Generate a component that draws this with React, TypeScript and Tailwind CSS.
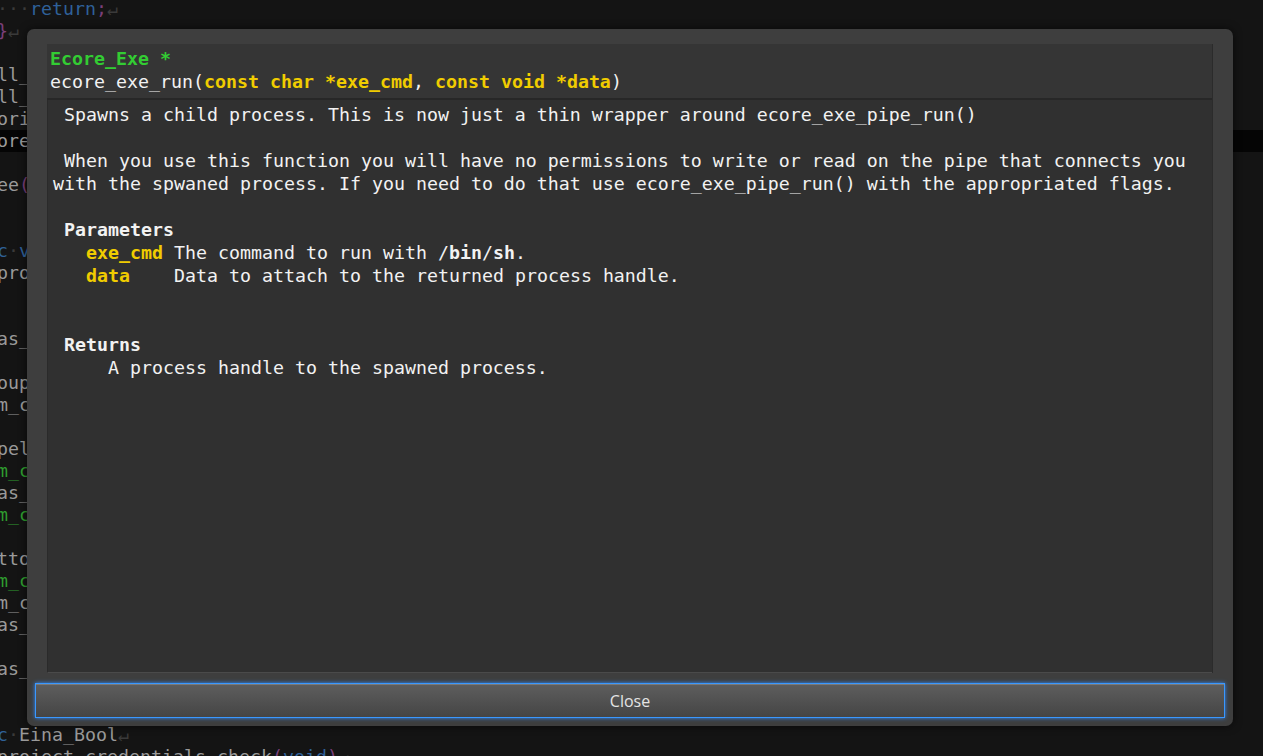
import React from 'react';

type Seg = { t: string; c?: string };

const GRAY = 'text-[#9a9a9a]';
const BLUE = 'text-[#2f6199]';
const PURPLE = 'text-[#7a3f7a]';
const GREEN = 'text-[#2f9e2f]';
const WS = 'text-[#3a3a3a]';

// background editor lines, shown from column 5 on (the rest is scrolled off / under the popup)
const codeLines: Seg[][] = [
  [{ t: '···', c: WS }, { t: 'return', c: BLUE }, { t: ';', c: PURPLE }, { t: '↵', c: WS }],
  [{ t: '}', c: PURPLE }, { t: '↵', c: WS }],
  [],
  [{ t: 'll_', c: GRAY }],
  [{ t: 'll_', c: GRAY }],
  [{ t: 'ori', c: GRAY }],
  [{ t: 'ore', c: GRAY }],
  [],
  [{ t: 'ee', c: GRAY }, { t: '(', c: PURPLE }],
  [],
  [],
  [{ t: 'c', c: BLUE }, { t: '·', c: WS }, { t: 'v', c: BLUE }],
  [{ t: 'pro', c: GRAY }],
  [],
  [],
  [{ t: 'as_', c: GRAY }],
  [],
  [{ t: 'oup', c: GRAY }],
  [{ t: 'm_c', c: GRAY }],
  [],
  [{ t: 'pel', c: GRAY }],
  [{ t: 'm_c', c: GREEN }],
  [{ t: 'as_', c: GRAY }],
  [{ t: 'm_c', c: GREEN }],
  [],
  [{ t: 'tto', c: GRAY }],
  [{ t: 'm_c', c: GREEN }],
  [{ t: 'm_c', c: GRAY }],
  [{ t: 'as_', c: GRAY }],
  [],
  [{ t: 'as_', c: GRAY }],
  [],
  [],
  [{ t: 'c', c: BLUE }, { t: '·', c: WS }, { t: 'Eina_Bool', c: GRAY }, { t: '↵', c: WS }],
  [
    { t: 'project_credentials_check', c: GRAY },
    { t: '(', c: PURPLE },
    { t: 'void', c: BLUE },
    { t: ')', c: PURPLE },
    { t: '↵', c: WS },
  ],
];

const Y = 'text-[#f0cc00] font-bold';
const B = 'font-bold';

export default function App() {
  return (
    <div
      className="relative h-[756px] w-full overflow-hidden bg-[#141414]"
      style={{ fontFamily: '"DejaVu Sans Mono", monospace' }}
    >
      {/* editor behind the popup */}
      <div className="-mt-[2px] text-[18.27px] leading-[22px]">
        {codeLines.map((line, i) => (
          <div
            key={i}
            className={`h-[22px] whitespace-pre -ml-[3px] ${i === 6 ? 'bg-[#050505]' : ''}`}
          >
            {line.map((s, j) => (
              <span key={j} className={s.c}>
                {s.t}
              </span>
            ))}
          </div>
        ))}
      </div>

      {/* documentation popup */}
      <div className="absolute left-[27px] top-[29px] flex h-[697px] w-[1206px] flex-col rounded-[7px] bg-[#3e3e3e] shadow-[0_0_8px_rgba(0,0,0,0.6)]">
        <div className="mx-[20px] mt-[15px] flex flex-1 flex-col border-r border-[#2b2b2b] text-[18.27px] leading-[23px] text-[#f2f2f2]">
          <div className="h-[56px] border-b-2 border-[#272727] bg-[#353535] pl-[3px] pt-[3px]">
            <div className="whitespace-pre font-bold text-[#33cc33]">Ecore_Exe *</div>
            <div className="whitespace-pre">
              ecore_exe_run(<span className={Y}>const char *exe_cmd</span>,{' '}
              <span className={Y}>const void *data</span>)
            </div>
          </div>
          <div className="flex-1 border-b border-l border-b-[#4a4a4a] border-l-[#2a2a2a] bg-[#303030] pl-[5px] pt-[3px] whitespace-pre">
            <div> Spawns a child process. This is now just a thin wrapper around ecore_exe_pipe_run()</div>
            <div>&nbsp;</div>
            <div> When you use this function you will have no permissions to write or read on the pipe that connects you</div>
            <div>with the spwaned process. If you need to do that use ecore_exe_pipe_run() with the appropriated flags.</div>
            <div>&nbsp;</div>
            <div>
              {' '}
              <span className={B}>Parameters</span>
            </div>
            <div>
              {'   '}
              <span className={Y}>exe_cmd</span> The command to run with /<span className={B}>bin</span>/
              <span className={B}>sh</span>.
            </div>
            <div>
              {'   '}
              <span className={Y}>data</span>
              {'    '}Data to attach to the returned process handle.
            </div>
            <div>&nbsp;</div>
            <div>&nbsp;</div>
            <div>
              {' '}
              <span className={B}>Returns</span>
            </div>
            <div>{'     '}A process handle to the spawned process.</div>
          </div>
        </div>
        <div className="px-[8px] pb-[8px] pt-[10px]">
          <button
            type="button"
            className="flex h-[35px] w-full items-center justify-center border border-[#3a98ff] bg-gradient-to-b from-[#5e5e5e] to-[#454545] text-[16px] text-[#e4e4e4] shadow-[0_0_4px_#2f8cff,inset_0_1px_0_#7a7a7a]"
            style={{ fontFamily: '"Open Sans", sans-serif' }}
          >
            Close
          </button>
        </div>
      </div>
    </div>
  );
}
